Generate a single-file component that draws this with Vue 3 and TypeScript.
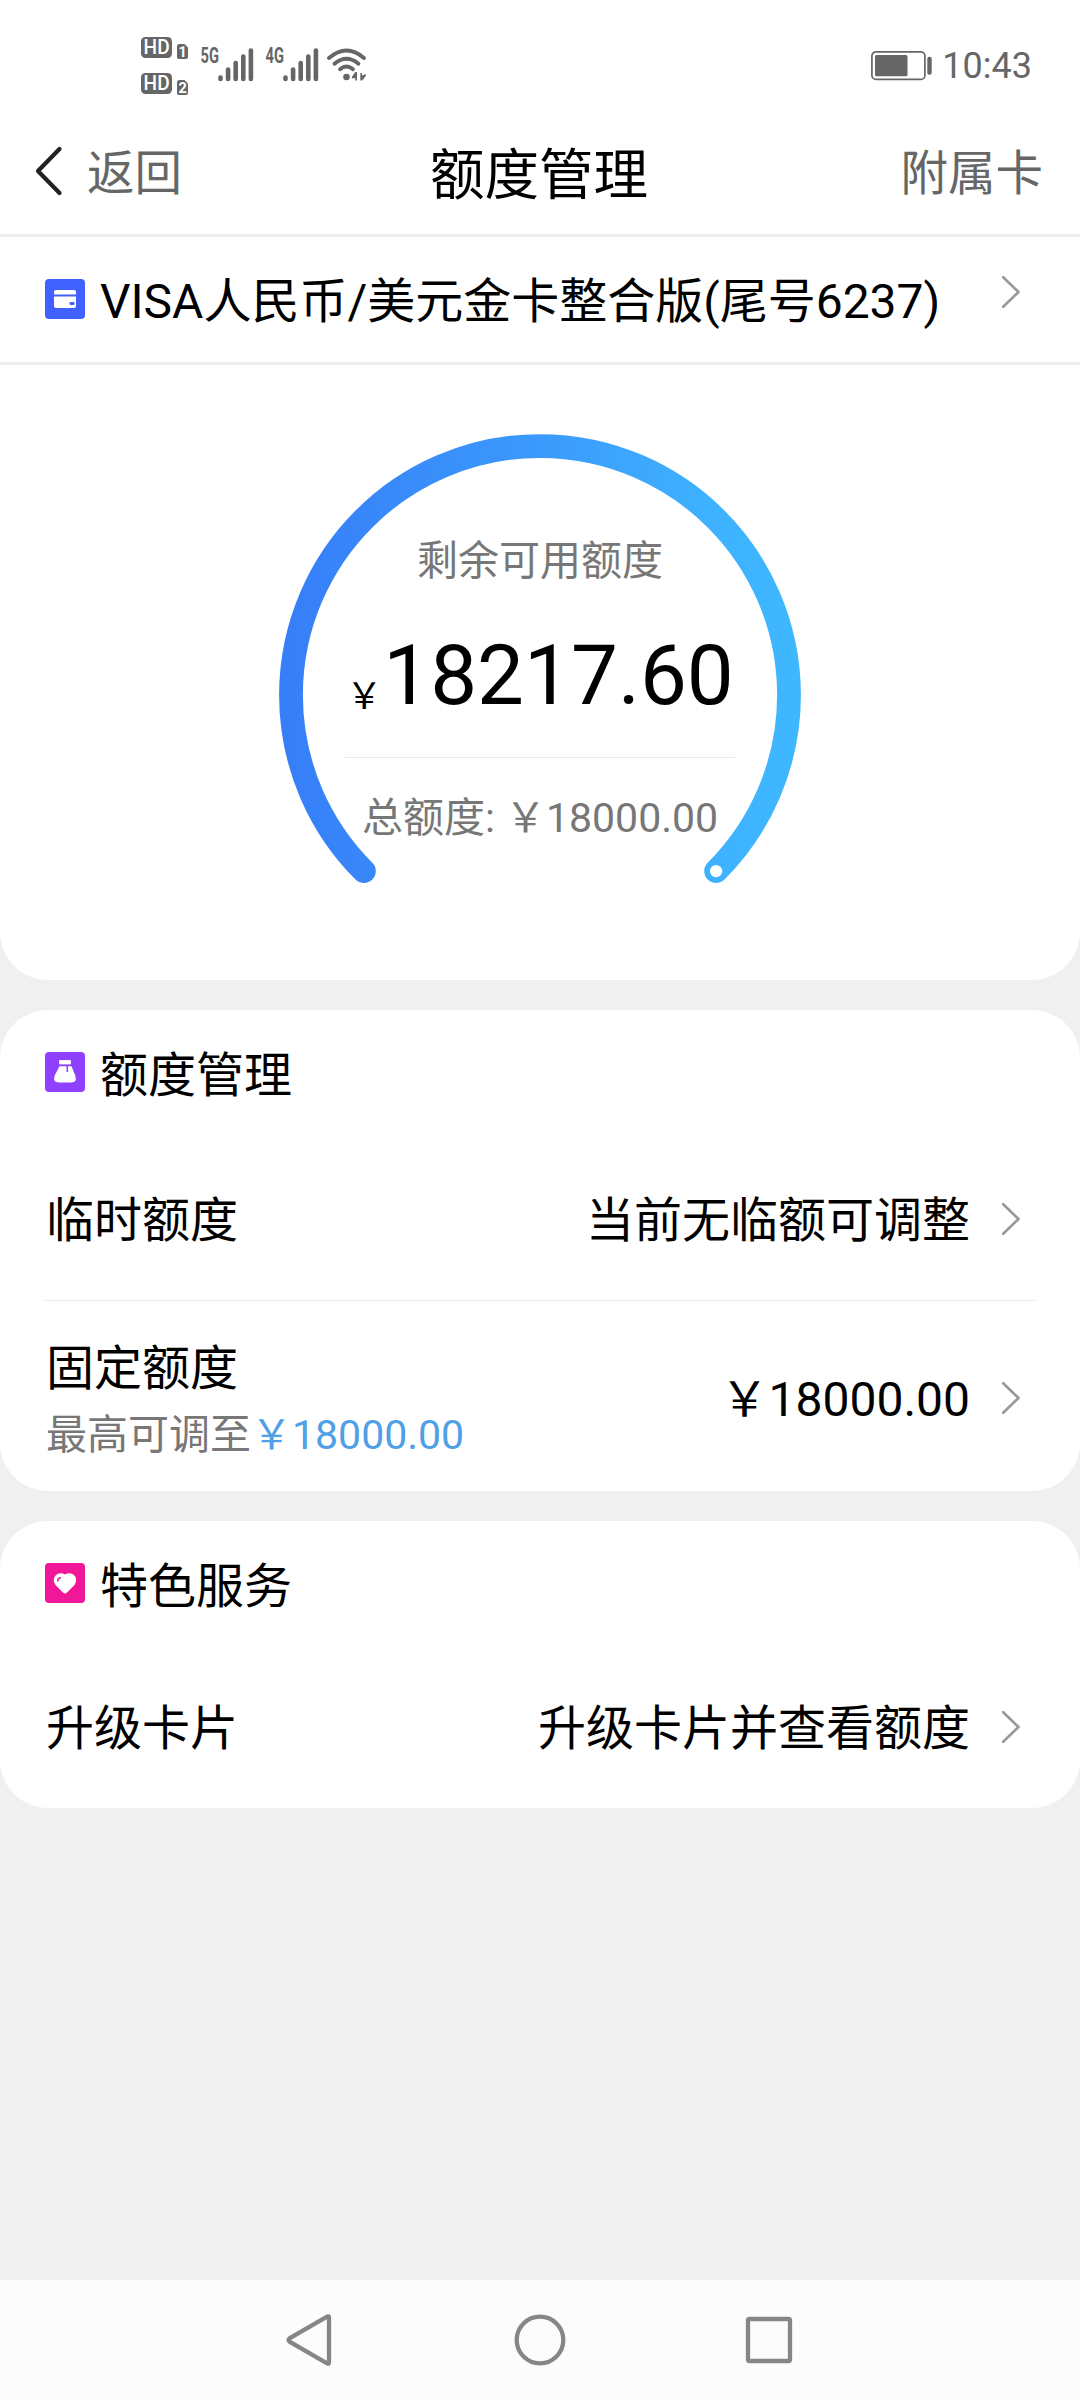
<script setup lang="ts">
interface ServiceRow {
  label: string
  value: string
  hint?: string
  hintAmount?: string
}

interface Section {
  id: string
  icon: 'bag' | 'heart'
  title: string
  rows: ServiceRow[]
}

const card = 'VISA人民币/美元金卡整合版(尾号6237)'
const available = '18217.60'
const total = '18000.00'

const networks = [
  { id: 'sim1', name: '5G' },
  { id: 'sim2', name: '4G' },
]
const bars = [6, 14, 20.5, 27, 33]

const sections: Section[] = [
  {
    id: 'limit',
    icon: 'bag',
    title: '额度管理',
    rows: [
      { label: '临时额度', value: '当前无临额可调整' },
      { label: '固定额度', value: '￥18000.00', hint: '最高可调至', hintAmount: '￥18000.00' },
    ],
  },
  {
    id: 'service',
    icon: 'heart',
    title: '特色服务',
    rows: [{ label: '升级卡片', value: '升级卡片并查看额度' }],
  },
]
</script>

<template>
  <div class="screen">
    <div class="status">
      <div class="signals">
        <svg class="hd" width="48" height="60" viewBox="0 0 48 60">
          <g v-for="n in 2" :key="n" :transform="`translate(0 ${(n - 1) * 36})`">
            <rect x="0" y="0" width="31" height="21" rx="4.5" fill="#666" />
            <text x="2.6" y="17.2" textLength="26" lengthAdjust="spacingAndGlyphs" font-size="19.5" font-weight="500" fill="#fff">HD</text>
            <path d="M38.5 7H43.5L47 10.5V20Q47 22 45 22H38Q36 22 36 20V9.5Q36 7 38.5 7Z" fill="#666" />
            <text x="41.6" y="19.8" text-anchor="middle" font-size="14.5" font-weight="700" fill="#fff">{{ n }}</text>
          </g>
        </svg>
        <svg v-for="net in networks" :key="net.id" class="net" width="54" height="46" viewBox="-1 -12 54 46">
          <text x="-0.5" y="15.2" textLength="18.4" lengthAdjust="spacingAndGlyphs" font-size="21.5" font-weight="700" fill="#666">{{ net.name }}</text>
          <rect v-for="(h, i) in bars" :key="i" :x="17.2 + i * 7.6" :y="33.3 - h" width="4.6" :height="h" rx="2.3" fill="#666" />
        </svg>
        <svg class="wifi" width="40" height="34" viewBox="0 0 40 34">
          <g fill="none" stroke="#666" stroke-width="3.8" stroke-linecap="round">
            <path d="M2 10Q19.5 -5 37 10" />
            <path d="M7.5 15.8Q19.5 5.8 31.5 15.8" />
            <path d="M13 21.3Q19.5 15.8 26 21.3" />
          </g>
          <circle cx="19.5" cy="29" r="3.3" fill="#666" />
          <path d="M30 24V32.5H28.3V30.2H24.8V29L28.3 24ZM33.3 25H34.9V27.5L38.8 26V27.8L36.5 31L34.9 32.5H33.3Z" fill="#666" />
        </svg>
      </div>
      <div class="clock">
        <svg width="62" height="30" viewBox="0 0 62 30">
          <rect x="0.9" y="0.9" width="53" height="27.5" rx="4" fill="none" stroke="#666" stroke-width="1.7" />
          <rect x="4" y="4" width="32.5" height="21.3" rx="1.5" fill="#666" />
          <rect x="56.3" y="5.8" width="4.4" height="18" rx="2" fill="#666" />
        </svg>
        <span>10:43</span>
      </div>
    </div>

    <header class="bar">
      <a class="back">
        <svg width="28" height="50" viewBox="0 0 28 50">
          <path d="M24.5 3L3 25L24.5 47" fill="none" stroke="#222" stroke-width="4.2" stroke-linecap="round" stroke-linejoin="round" />
        </svg>
        <span>返回</span>
      </a>
      <h1>额度管理</h1>
      <a class="extra">附属卡</a>
    </header>

    <main>
      <section class="panel hero">
        <div class="card-row">
          <svg class="badge" width="40" height="40" viewBox="0 0 40 40">
            <rect width="40" height="40" rx="4" fill="#4060ff" />
            <path d="M11 11H29Q31 11 31 13V15.5H9V13Q9 11 11 11ZM9 17.500H31V27Q31 29 29 29H11Q9 29 9 27Z" fill="#fff" />
            <rect x="24.5" y="23" width="5" height="3" rx="1.2" fill="#4060ff" />
          </svg>
          <span class="card-name">{{ card }}</span>
          <svg class="chev" width="18" height="32" viewBox="0 0 18 32">
            <path d="M1.2 1.2L16.5 16L1.2 30.8" />
          </svg>
        </div>

        <div class="gauge">
          <svg width="522" height="460" viewBox="0 0 522 460">
            <defs>
              <linearGradient id="arc" x1="12" y1="0" x2="510" y2="0" gradientUnits="userSpaceOnUse">
                <stop offset="0" stop-color="#377ff8" />
                <stop offset="0.5" stop-color="#3b9afc" />
                <stop offset="0.85" stop-color="#3eb2ff" />
                <stop offset="1" stop-color="#3fb7ff" />
              </linearGradient>
            </defs>
            <path d="M84.9 437.1A249 249 0 1 1 437.1 437.1" fill="none" stroke="url(#arc)" stroke-width="23.8" stroke-linecap="round" />
            <circle cx="437.1" cy="437.1" r="6.2" fill="#fff" />
          </svg>
          <div class="gauge-text">
            <p class="label">剩余可用额度</p>
            <p class="amount"><span class="yen">￥</span>{{ available }}</p>
            <p class="total">总额度: ￥{{ total }}</p>
          </div>
        </div>
      </section>

      <section v-for="s in sections" :key="s.id" class="panel" :class="s.id">
        <h2>
          <svg class="badge" width="40" height="40" viewBox="0 0 40 40">
            <template v-if="s.icon === 'bag'">
              <rect width="40" height="40" rx="4" fill="#9040ff" />
              <path d="M14.5 8.5H25.5V12H14.5Z" fill="#fff" stroke="#fff" stroke-width="0.8" stroke-linejoin="round" />
              <path d="M14.5 14.2H21.5V20H23V14.2H26.5L30.3 23.5Q32.5 30.5 26 30.5H14Q7.5 30.5 9.7 23.5Z" fill="#fff" />
            </template>
            <template v-else>
              <rect width="40" height="40" rx="4" fill="#f01898" />
              <path d="M20 30.5Q19 30.5 17.5 29L11 22.5C7.5 18.5 8.5 13 12.5 11Q16.5 9.5 20 11.5Q23.5 9.5 27.5 11C31.5 13 32.5 18.5 29 22.5L22.5 29Q21 30.5 20 30.5Z" fill="#fff" />
              <path d="M12.700 18Q12.700 15 15.500 14.700" fill="none" stroke="#f01898" stroke-width="1.5" stroke-linecap="round" />
            </template>
          </svg>
          <span>{{ s.title }}</span>
        </h2>
        <div v-for="r in s.rows" :key="r.label" class="row" :class="{ tall: r.hint }">
          <div class="name">
            <span>{{ r.label }}</span>
            <small v-if="r.hint">{{ r.hint }}<b>{{ r.hintAmount }}</b></small>
          </div>
          <span class="value">{{ r.value }}</span>
          <svg class="chev" width="18" height="32" viewBox="0 0 18 32">
            <path d="M1.2 1.2L16.5 16L1.2 30.8" />
          </svg>
        </div>
      </section>
    </main>

    <nav class="keys">
      <svg width="52" height="56" viewBox="0 0 52 56">
        <path d="M42.500 4.500Q44 3.800 44 5.500V50.500Q44 52.200 42.500 51.500L4.500 29.600Q2.500 28 4.500 26.400Z" />
      </svg>
      <svg width="52" height="56" viewBox="0 0 52 56"><circle cx="26" cy="28" r="23.300" /></svg>
      <svg width="52" height="56" viewBox="0 0 52 56"><rect x="5" y="7" width="42" height="42" rx="1.500" /></svg>
    </nav>
  </div>
</template>

<style>
body {
  margin: 0;
}
</style>

<style scoped>
.screen {
  display: flex;
  flex-direction: column;
  width: 1080px;
  height: 2400px;
  overflow: hidden;
  background: #fff;
  color: #000;
  font-family: Roboto, "Noto Sans CJK SC", sans-serif;
  font-size: 48px;
  line-height: 60px;
}

svg {
  display: block;
  flex: none;
}

h1,
h2,
p {
  margin: 0;
  font-weight: 400;
}

.status {
  display: flex;
  justify-content: space-between;
  height: 114px;
  box-sizing: border-box;
  padding: 0 48px 0 141px;
  color: #666;
}

.signals {
  display: flex;
  align-items: flex-start;
}

.hd {
  margin-top: 37px;
  margin-right: 11px;
}

.net {
  margin-top: 36px;
  margin-right: 11px;
}

.wifi {
  margin-top: 48px;
  margin-left: -3px;
}

.clock {
  display: flex;
  align-items: center;
  height: 60px;
  margin-top: 36px;
  font-size: 36px;
}

.clock span {
  margin-left: 9px;
}

.bar {
  display: grid;
  grid-template-columns: 1fr auto 1fr;
  align-items: center;
  height: 120px;
  padding: 0 37px 0 35px;
  border-bottom: 3px solid #eee;
}

.back {
  display: flex;
  align-items: center;
  color: #666;
  font-size: 47.5px;
}

.back svg {
  margin-top: -6px;
}

.back span {
  margin-left: 24px;
}

.bar h1 {
  padding-top: 1px;
  font-size: 54.5px;
}

.extra {
  color: #666;
  font-size: 47.5px;
  text-align: right;
}

main {
  flex: 1;
  display: flex;
  flex-direction: column;
  gap: 30px;
  background: #f0f0f0;
}

.panel {
  background: #fff;
  border-radius: 48px;
}

.hero {
  height: 743px;
  border-radius: 0 0 48px 48px;
}

.card-row {
  display: flex;
  align-items: center;
  height: 125px;
  padding: 0 60px 0 45px;
  border-bottom: 3px solid #eee;
}

.card-row .badge {
  margin-top: -1px;
}

.card-name {
  flex: 1;
  margin: 4px 0 0 15px;
}

.card-row .chev {
  margin-top: -16px;
}

.chev path {
  fill: none;
  stroke: #999;
  stroke-width: 2.7;
  stroke-linecap: round;
  stroke-linejoin: round;
}

.gauge {
  display: grid;
  justify-content: center;
  margin-top: 69px;
}

.gauge > * {
  grid-area: 1 / 1;
}

.gauge-text {
  display: flex;
  flex-direction: column;
  align-items: center;
  padding-top: 100px;
}

.label,
.total {
  color: #777;
  font-size: 41px;
  line-height: 54px;
  white-space: nowrap;
}

.amount {
  width: 390px;
  height: 84px;
  margin-top: 46px;
  padding-bottom: 39px;
  border-bottom: 1px solid #e8e8e8;
  font-size: 83.5px;
  line-height: 84px;
  text-align: center;
  white-space: nowrap;
}

.yen {
  margin-right: 1px;
  font-size: 36px;
  line-height: 36px;
  vertical-align: -5px;
}

.total {
  margin-top: 33px;
}

.panel h2 {
  display: flex;
  align-items: center;
  height: 124px;
  padding-left: 45px;
  font-size: 48px;
}

.panel h2 span {
  margin: 7px 0 0 15px;
}

.row {
  display: flex;
  align-items: center;
  height: 166px;
  margin: 0 45px;
  padding: 4px 15px 0 0;
  box-sizing: border-box;
}

.limit {
  height: 481px;
}

.service {
  height: 287px;
}

.service .row {
  height: 163px;
  padding-top: 1px;
}

.row .name {
  flex: 1;
  display: flex;
  flex-direction: column;
  padding: 4px 0 0 1px;
}

.row .value {
  padding-top: 4px;
}

.row .chev {
  margin-left: 32px;
}

.tall {
  height: 190px;
  border-top: 1px solid #e8e8e8;
}

.tall .name {
  padding-top: 6px;
}

small {
  margin-top: 9px;
  color: #777;
  font-size: 41px;
  line-height: 54px;
}

small b {
  color: #4fa0e6;
  font-weight: 400;
}

.keys {
  display: flex;
  justify-content: center;
  gap: 177px;
  height: 120px;
  align-items: center;
  background: #fcfcfc;
}

.keys svg {
  fill: none;
  stroke: #868686;
  stroke-width: 4.3;
}
</style>
